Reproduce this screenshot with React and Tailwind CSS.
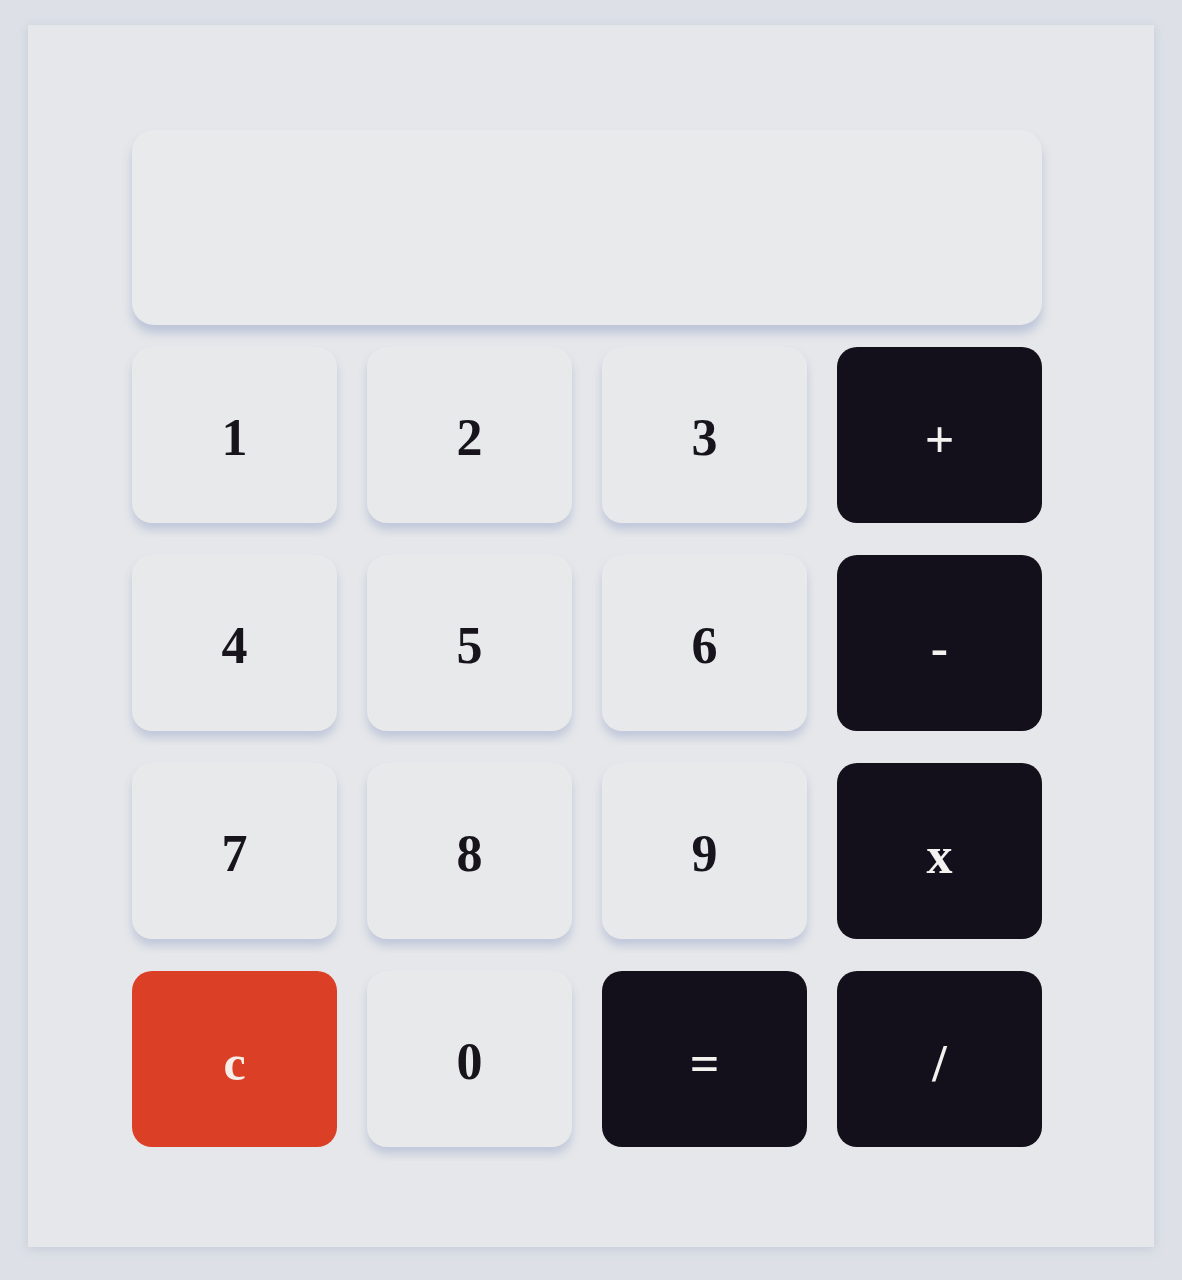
import React, { useState } from 'react';

const keys = [
  { label: '1' }, { label: '2' }, { label: '3' }, { label: '+', op: true },
  { label: '4' }, { label: '5' }, { label: '6' }, { label: '-', op: true },
  { label: '7' }, { label: '8' }, { label: '9' }, { label: 'x', op: true },
  { label: 'c', clear: true }, { label: '0' }, { label: '=', op: true }, { label: '/', op: true },
];

const App = () => {
  const [value, setValue] = useState('');

  function press (k) {
    if (k.clear) return setValue('');
    if (k.label === '=') {
      try {
        // eslint-disable-next-line no-new-func
        setValue(String(Function(`return (${value.replace(/x/g, '*')})`)()));
      } catch (e) {
        setValue('');
      }
      return;
    }
    setValue(value + k.label);
  }

  return (
    <div className="min-h-screen bg-[#dde1e7] px-[28px] pt-[25px] pb-[30px] font-['Liberation_Serif',serif]">
      <div className="bg-[#e5e7ea] shadow-[0_2px_10px_rgba(150,160,185,0.35)] px-[104px] pt-[105px] pb-[100px]">

        <div className="h-[195px] w-[910px] rounded-[22px] bg-[#e8eaec] shadow-[0_8px_10px_rgba(140,155,195,0.45)] flex items-center justify-end px-8 text-[56px] font-bold text-[#111]">
          {value}
        </div>

        <div className="grid grid-cols-[repeat(4,205px)] gap-x-[30px] gap-y-[32px] mt-[22px] w-[910px]">
          {keys.map(k => (
            <button
              key={k.label}
              onClick={() => press(k)}
              className={
                k.clear
                  ? 'h-[176px] pt-[8px] rounded-[20px] bg-[#db3f26] text-[#f6eee8] text-[50px] font-bold'
                  : k.op
                  ? 'h-[176px] pt-[10px] rounded-[20px] bg-[#14101b] text-[#f4f2ef] text-[52px] font-bold'
                  : 'h-[176px] pt-[6px] rounded-[20px] bg-[#e7e9eb] text-[#17141c] text-[52px] font-bold shadow-[0_7px_9px_rgba(140,155,195,0.4)]'
              }
            >
              {k.label}
            </button>
          ))}
        </div>

      </div>
    </div>
  );
};

export default App;
